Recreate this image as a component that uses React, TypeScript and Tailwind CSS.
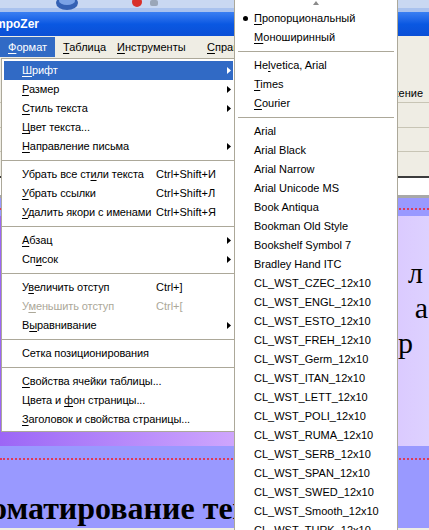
import type { ReactElement } from 'react';

// ── Menu data ───────────────────────────────────────────────────────────

type Label = [string, string, string];

type MenuEntry =
  | { kind: 'sep' }
  | {
      kind: 'item';
      label: Label;
      shortcut?: string;
      sub?: boolean;
      active?: boolean;
      disabled?: boolean;
    };

const formatMenu: MenuEntry[] = [
  { kind: 'item', label: ['', 'Ш', 'рифт'], sub: true, active: true },
  { kind: 'item', label: ['', 'Р', 'азмер'], sub: true },
  { kind: 'item', label: ['', 'С', 'тиль текста'], sub: true },
  { kind: 'item', label: ['', 'Ц', 'вет текста...'] },
  { kind: 'item', label: ['', 'Н', 'аправление письма'], sub: true },
  { kind: 'sep' },
  { kind: 'item', label: ['Убрать все ст', 'и', 'ли текста'], shortcut: 'Ctrl+Shift+И' },
  { kind: 'item', label: ['', 'У', 'брать ссылки'], shortcut: 'Ctrl+Shift+Л' },
  { kind: 'item', label: ['', 'У', 'далить якори с именами'], shortcut: 'Ctrl+Shift+Я' },
  { kind: 'sep' },
  { kind: 'item', label: ['', 'А', 'бзац'], sub: true },
  { kind: 'item', label: ['Сп', 'и', 'сок'], sub: true },
  { kind: 'sep' },
  { kind: 'item', label: ['У', 'в', 'еличить отступ'], shortcut: 'Ctrl+]' },
  { kind: 'item', label: ['У', 'м', 'еньшить отступ'], shortcut: 'Ctrl+[', disabled: true },
  { kind: 'item', label: ['В', 'ы', 'равнивание'], sub: true },
  { kind: 'sep' },
  { kind: 'item', label: ['Сетка позиционирования', '', ''] },
  { kind: 'sep' },
  { kind: 'item', label: ['', 'С', 'войства ячейки таблицы...'] },
  { kind: 'item', label: ['Цвета и ', 'ф', 'он страницы...'] },
  { kind: 'item', label: ['', 'З', 'аголовок и свойства страницы...'] },
];

type FontEntry = { kind: 'sep' } | { kind: 'item'; label: Label; checked?: boolean };

const fontNames = [
  'Arial',
  'Arial Black',
  'Arial Narrow',
  'Arial Unicode MS',
  'Book Antiqua',
  'Bookman Old Style',
  'Bookshelf Symbol 7',
  'Bradley Hand ITC',
  'CL_WST_CZEC_12x10',
  'CL_WST_ENGL_12x10',
  'CL_WST_ESTO_12x10',
  'CL_WST_FREH_12x10',
  'CL_WST_Germ_12x10',
  'CL_WST_ITAN_12x10',
  'CL_WST_LETT_12x10',
  'CL_WST_POLI_12x10',
  'CL_WST_RUMA_12x10',
  'CL_WST_SERB_12x10',
  'CL_WST_SPAN_12x10',
  'CL_WST_SWED_12x10',
  'CL_WST_Smooth_12x10',
  'CL_WST_TURK_12x10',
];

const fontMenu: FontEntry[] = [
  { kind: 'item', label: ['', 'П', 'ропорциональный'], checked: true },
  { kind: 'item', label: ['', 'М', 'оноширинный'] },
  { kind: 'sep' },
  { kind: 'item', label: ['He', 'l', 'vetica, Arial'] },
  { kind: 'item', label: ['', 'T', 'imes'] },
  { kind: 'item', label: ['', 'C', 'ourier'] },
  { kind: 'sep' },
  ...fontNames.map((name): FontEntry => ({ kind: 'item', label: [name, '', ''] })),
];

// ── Small pieces ────────────────────────────────────────────────────────

function Mnemonic({ label }: { label: Label }): ReactElement {
  const [pre, key, post] = label;
  return (
    <span className="whitespace-nowrap">
      {pre}
      {key && <span className="underline decoration-1 underline-offset-[2px]">{key}</span>}
      {post}
    </span>
  );
}

function SubArrow({ white }: { white?: boolean }): ReactElement {
  return (
    <svg width="4" height="7" viewBox="0 0 4 7" className="block">
      <polygon points="0,0 4,3.5 0,7" fill={white ? '#ffffff' : '#000000'} />
    </svg>
  );
}

// ── Background window ───────────────────────────────────────────────────

function DesktopStrip(): ReactElement {
  return (
    <svg width="429" height="12" viewBox="0 0 429 12" className="block">
      <rect width="429" height="12" fill="#c9d8f2" />
      <rect x="0" y="8" width="429" height="4" fill="#a9c2ee" />
      <ellipse cx="67" cy="3" rx="11" ry="7" fill="#3461b4" />
      <ellipse cx="67" cy="1" rx="8" ry="4" fill="#7aa2e6" />
      <ellipse cx="137" cy="2" rx="5" ry="5" fill="#d8302a" />
      <rect x="150" y="0" width="8" height="6" rx="2" fill="#9aa6b8" />
    </svg>
  );
}

function MenuBar(): ReactElement {
  const items: { label: Label; w: string; active?: boolean }[] = [
    { label: ['', 'Ф', 'ормат'], w: 'w-[55px]', active: true },
    { label: ['', 'Т', 'аблица'], w: 'w-[54px]' },
    { label: ['', 'И', 'нструменты'], w: 'w-[90px]' },
    { label: ['', 'С', 'правка'], w: 'w-[60px]' },
  ];
  return (
    <div className="flex h-[22px] items-center bg-[#efede4]">
      {items.map((it) => (
        <div
          key={it.label.join('')}
          className={`flex h-[20px] items-center pl-[8px] ${it.w} ${
            it.active ? 'bg-[#316ac5] text-white' : 'text-black'
          }`}
        >
          <Mnemonic label={it.label} />
        </div>
      ))}
    </div>
  );
}

function Toolbars(): ReactElement {
  return (
    <div className="flex flex-col bg-[#efede4]">
      <div className="flex h-[45px] items-end justify-end border-b border-[#c8c5b5] pr-[6px] pb-[1px]">
        <span>Изображение</span>
      </div>
      <div className="h-[25px] border-b border-[#c8c5b5]" />
      <div className="h-[24px] border-b border-[#c8c5b5]" />
      <div className="h-[26px] border-b-2 border-[#3c3c3c]" />
      <div className="h-[20px] border-b-[3px] border-[#a8a8a8] bg-white" />
    </div>
  );
}

function Editor(): ReactElement {
  return (
    <div className="flex flex-col font-['Liberation_Serif','Times_New_Roman',serif] text-black">
      <div className="flex h-[18px] flex-col bg-[#9999ff] pt-[10px]">
        <div className="h-[2px] border-t-2 border-dotted border-[#e03a5a]" />
      </div>
      <div className="flex h-[230px] flex-col bg-linear-to-r from-[#9c66f6] via-[#cfa6fd] via-55% to-[#ddd1ff] pt-[39px] text-[30px] leading-[35px]">
        <div className="self-end pr-[6px]">л</div>
        <div className="self-end pr-[1px]">а</div>
        <div className="self-end pr-[16px]">р</div>
      </div>
      <div className="flex h-[82px] flex-col overflow-hidden bg-[#9999ff] pt-[12px]">
        <div className="h-[2px] border-t-2 border-dotted border-[#e03a5a]" />
        <div className="-ml-[9px] mt-[30px] whitespace-nowrap text-[32px] font-bold leading-[36px]">
          оматирование текста
        </div>
      </div>
    </div>
  );
}

// ── Menus ───────────────────────────────────────────────────────────────

function FormatMenu(): ReactElement {
  return (
    <div className="absolute left-[1px] top-[58px] w-[235px] border border-[#aca899] bg-white pt-[2px] pb-[2px]">
      {formatMenu.map((entry, i) =>
        entry.kind === 'sep' ? (
          <div key={i} className="flex h-[9px] items-center">
            <div className="h-px w-full bg-[#aca899]" />
          </div>
        ) : (
          <div
            key={i}
            className={`mx-[2px] grid h-[19px] grid-cols-[134px_1fr_auto] items-center pl-[18px] pr-[2px] ${
              entry.active
                ? 'bg-[#316ac5] text-white'
                : entry.disabled
                  ? 'text-[#aca899]'
                  : 'text-black'
            }`}
          >
            <span className="tracking-[-0.1px]">
              <Mnemonic label={entry.label} />
            </span>
            <span className="whitespace-nowrap">{entry.shortcut ?? ''}</span>
            <span>{entry.sub && <SubArrow white={entry.active} />}</span>
          </div>
        ),
      )}
    </div>
  );
}

function FontMenu(): ReactElement {
  return (
    <div className="absolute left-[234px] top-0 h-[530px] w-[164px] overflow-hidden border-x border-[#aca899] bg-white">
      <div className="flex h-[9px] justify-center pt-[1px]">
        <svg width="6" height="4" viewBox="0 0 6 4" className="block">
          <polygon points="0,4 3,0 6,4" fill="#8a8a8a" />
        </svg>
      </div>
      {fontMenu.map((entry, i) =>
        entry.kind === 'sep' ? (
          <div key={i} className="flex h-[9px] items-center px-[3px]">
            <div className="h-px w-full bg-[#aca899]" />
          </div>
        ) : (
          <div key={i} className="flex h-[19px] items-center text-black">
            <span className="flex w-[19px] pl-[8px]">
              {entry.checked && <span className="h-[5px] w-[5px] rounded-full bg-black" />}
            </span>
            <Mnemonic label={entry.label} />
          </div>
        ),
      )}
    </div>
  );
}

// ── Page ────────────────────────────────────────────────────────────────

export default function App(): ReactElement {
  return (
    <div className="relative h-[530px] w-[429px] overflow-hidden bg-[#efede4] font-['Liberation_Sans',Arial,sans-serif] text-[11px]">
      <DesktopStrip />
      <div className="flex h-[24px] items-center bg-linear-to-b from-[#3a7ff2] via-[#0a58e2] to-[#0b4fd6]">
        <span className="-ml-[5px] text-[12px] font-bold text-white">mpoZer</span>
      </div>
      <MenuBar />
      <Toolbars />
      <Editor />
      <FormatMenu />
      <FontMenu />
    </div>
  );
}
